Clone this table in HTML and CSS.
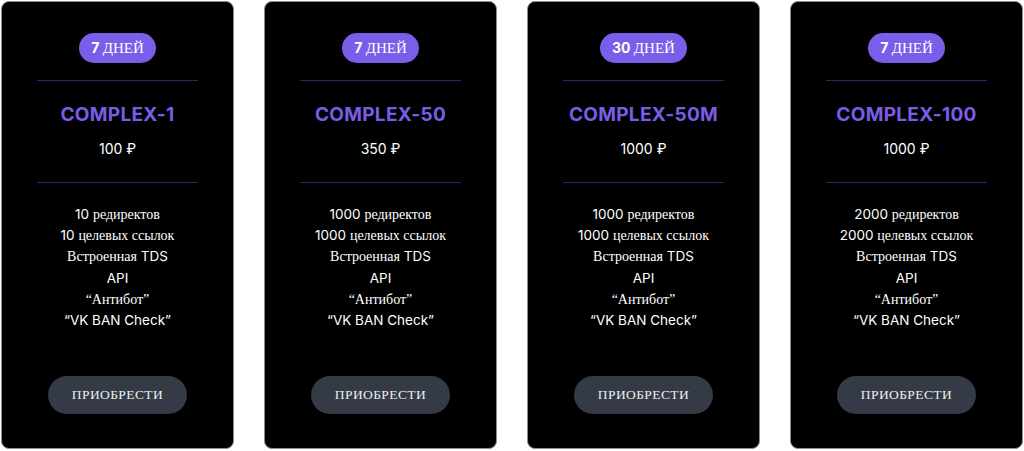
FILE: index.html
```html
<!DOCTYPE html>
<html lang="ru">
<head>
<meta charset="utf-8">
<title>Тарифы</title>
<link rel="stylesheet" href="styles.css">
</head>
<body>
<main class="plans">
  <section class="card">
    <div class="badge">7 <span class="cy">ДНЕЙ</span></div>
    <hr class="rule">
    <h2 class="title">COMPLEX-1</h2>
    <div class="price">100 ₽</div>
    <hr class="rule rule-low">
    <ul class="features">
      <li>10 <span class="cy">редиректов</span></li>
      <li>10 <span class="cy">целевых ссылок</span></li>
      <li><span class="cy">Встроенная</span> TDS</li>
      <li>API</li>
      <li><span class="cy">“Антибот”</span></li>
      <li>“VK BAN Check”</li>
    </ul>
    <button class="buy cy">ПРИОБРЕСТИ</button>
  </section>
  <section class="card">
    <div class="badge">7 <span class="cy">ДНЕЙ</span></div>
    <hr class="rule">
    <h2 class="title">COMPLEX-50</h2>
    <div class="price">350 ₽</div>
    <hr class="rule rule-low">
    <ul class="features">
      <li>1000 <span class="cy">редиректов</span></li>
      <li>1000 <span class="cy">целевых ссылок</span></li>
      <li><span class="cy">Встроенная</span> TDS</li>
      <li>API</li>
      <li><span class="cy">“Антибот”</span></li>
      <li>“VK BAN Check”</li>
    </ul>
    <button class="buy cy">ПРИОБРЕСТИ</button>
  </section>
  <section class="card">
    <div class="badge">30 <span class="cy">ДНЕЙ</span></div>
    <hr class="rule">
    <h2 class="title">COMPLEX-50M</h2>
    <div class="price">1000 ₽</div>
    <hr class="rule rule-low">
    <ul class="features">
      <li>1000 <span class="cy">редиректов</span></li>
      <li>1000 <span class="cy">целевых ссылок</span></li>
      <li><span class="cy">Встроенная</span> TDS</li>
      <li>API</li>
      <li><span class="cy">“Антибот”</span></li>
      <li>“VK BAN Check”</li>
    </ul>
    <button class="buy cy">ПРИОБРЕСТИ</button>
  </section>
  <section class="card">
    <div class="badge">7 <span class="cy">ДНЕЙ</span></div>
    <hr class="rule">
    <h2 class="title">COMPLEX-100</h2>
    <div class="price">1000 ₽</div>
    <hr class="rule rule-low">
    <ul class="features">
      <li>2000 <span class="cy">редиректов</span></li>
      <li>2000 <span class="cy">целевых ссылок</span></li>
      <li><span class="cy">Встроенная</span> TDS</li>
      <li>API</li>
      <li><span class="cy">“Антибот”</span></li>
      <li>“VK BAN Check”</li>
    </ul>
    <button class="buy cy">ПРИОБРЕСТИ</button>
  </section>
</main>
</body>
</html>
```
FILE: styles.css
```css
* { box-sizing: border-box; }
html, body { margin: 0; background: #ffffff; }
body {
  font-family: "Inter", "Noto Sans", sans-serif;
  color: #ffffff;
}
.plans {
  display: flex;
  gap: 30px;
  padding: 1px 1px 0 1px;
}
.card {
  width: 233px;
  height: 448px;
  background: #000000;
  border: 1px solid #8c8c8c;
  border-radius: 8px;
  display: flex;
  flex-direction: column;
  align-items: center;
  padding: 31px 0 34px;
}
.cy { font-family: "Liberation Serif", "DejaVu Serif", serif; }
.badge {
  height: 30px;
  padding: 0 12px;
  border-radius: 15px;
  background: #7a5de8;
  font-size: 14px;
  font-weight: 700;
  line-height: 30px;
  white-space: nowrap;
}
.badge .cy { font-weight: 400; font-size: 15px; }
.rule {
  width: 161px;
  height: 1px;
  margin: 17px 0 0;
  border: 0;
  background: #2b2566;
}
.title {
  margin: 22px 0 0;
  font-size: 19px;
  line-height: 24px;
  font-weight: 700;
  color: #7b5ce6;
  letter-spacing: 0.3px;
}
.price {
  margin-top: 12px;
  font-size: 14px;
  line-height: 20px;
}
.rule-low { margin-top: 23px; }
.features {
  list-style: none;
  margin: 21px 0 0;
  padding: 0;
  text-align: center;
  font-size: 13.5px;
  line-height: 21.2px;
}
.features .cy { font-size: 14px; }
.buy {
  margin-top: auto;
  width: 139px;
  height: 38px;
  border: 0;
  border-radius: 19px;
  background: #343b46;
  color: #ededed;
  font-size: 13.5px;
  letter-spacing: 0.4px;
  cursor: pointer;
}
```
